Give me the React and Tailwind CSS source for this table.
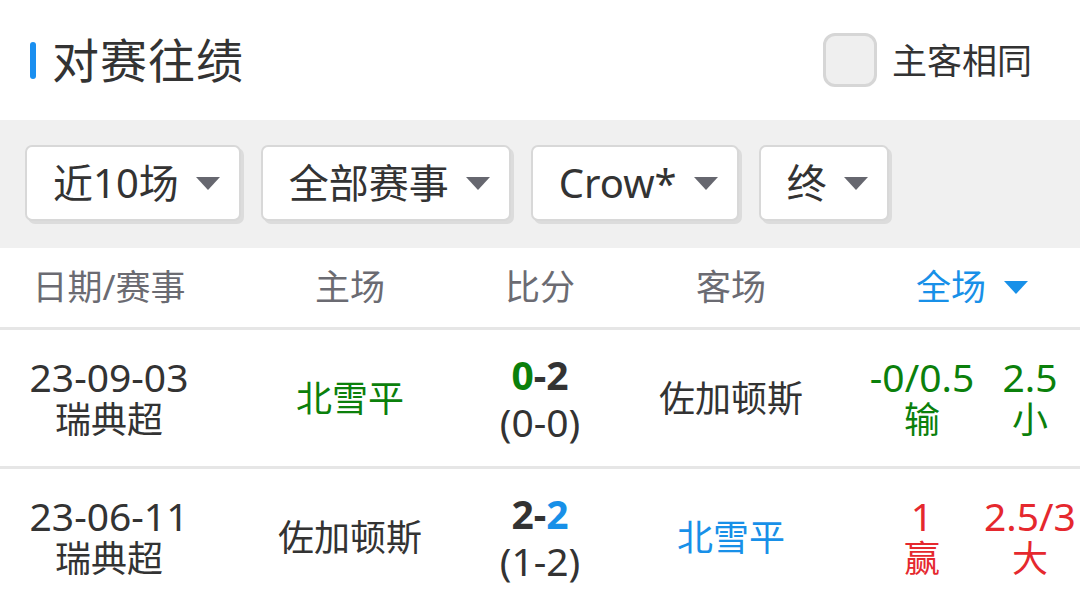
import React from 'react';

const font = { fontFamily: '"Noto Sans", "Noto Sans CJK SC", sans-serif' };

const filters = ['近10场', '全部赛事', 'Crow*', '终'];

const matches = [
  {
    date: '23-09-03',
    league: '瑞典超',
    home: '北雪平',
    homeColor: 'text-[#0b800b]',
    away: '佐加顿斯',
    awayColor: 'text-[#333333]',
    score: [
      { t: '0', c: 'text-[#0b800b]' },
      { t: '-2', c: 'text-[#333333]' },
    ],
    half: '(0-0)',
    handicap: '-0/0.5',
    handicapRes: '输',
    total: '2.5',
    totalRes: '小',
    oddsColor: 'text-[#0b800b]',
  },
  {
    date: '23-06-11',
    league: '瑞典超',
    home: '佐加顿斯',
    homeColor: 'text-[#333333]',
    away: '北雪平',
    awayColor: 'text-[#1890e8]',
    score: [
      { t: '2-', c: 'text-[#333333]' },
      { t: '2', c: 'text-[#1890e8]' },
    ],
    half: '(1-2)',
    handicap: '1',
    handicapRes: '赢',
    total: '2.5/3',
    totalRes: '大',
    oddsColor: 'text-[#e5282e]',
  },
];

function Caret({ className }) {
  return (
    <svg width="24" height="13" viewBox="0 0 24 13" className={className}>
      <path d="M0 0 H24 L12 13 Z" fill="currentColor" />
    </svg>
  );
}

export default function App() {
  return (
    <div className="w-[1080px] h-[590px] bg-white overflow-hidden" style={font}>
      {/* 标题 */}
      <div className="h-[120px] flex items-center justify-between pl-[30px] pr-[48px]">
        <div className="flex items-center">
          <div className="w-[6px] h-[37px] rounded-full bg-[#1a8ff0]"></div>
          <h1 className="ml-[16px] text-[47px] leading-none text-[#333333] tracking-[1px]">对赛往绩</h1>
        </div>
        <label className="flex items-center gap-[15px]">
          <span className="w-[54px] h-[54px] rounded-[12px] border-[3px] border-[#d6d6d6] bg-[#efefef]"></span>
          <span className="text-[35px] leading-none text-[#333333]">主客相同</span>
        </label>
      </div>

      {/* 筛选 */}
      <div className="h-[128px] bg-[#f0f0f0] flex items-start gap-[20px] px-[25px] pt-[25px]">
        {filters.map((f) => (
          <button
            key={f}
            className="h-[76px] flex items-center gap-[17px] pl-[26px] pr-[19px] bg-white border-2 border-[#d8d8d8] rounded-[7px] shadow-[3px_3px_0_#dcdcdc]"
          >
            <span className="text-[40px] leading-none text-[#333333]">{f}</span>
            <Caret className="text-[#66676f]" />
          </button>
        ))}
      </div>

      {/* 表头 */}
      <div className="grid grid-cols-[218px_264px_116px_266px_116px_100px] h-[82px] border-b-[3px] border-[#e6e6e6] text-[35px] text-[#6b6b72] items-center text-center">
        <div>日期/赛事</div>
        <div>主场</div>
        <div>比分</div>
        <div>客场</div>
        <div className="col-span-2 flex items-center justify-center gap-[18px] text-[#1890e8]">
          <span>全场</span>
          <Caret />
        </div>
      </div>

      {/* 比赛列表 */}
      {matches.map((m) => (
        <div
          key={m.date}
          className="grid grid-cols-[218px_264px_116px_266px_116px_100px] h-[139px] border-b-[3px] border-[#e6e6e6] items-center text-center text-[36px] leading-[43px] text-[#333333]"
        >
          <div className="flex flex-col">
            <span className="text-[39px]">{m.date}</span>
            <span>{m.league}</span>
          </div>
          <div className={m.homeColor}>{m.home}</div>
          <div className="flex flex-col text-[39px]">
            <span className="font-bold">
              {m.score.map((s, i) => (
                <span key={i} className={s.c}>{s.t}</span>
              ))}
            </span>
            <span className="mt-[4px]">{m.half}</span>
          </div>
          <div className={m.awayColor}>{m.away}</div>
          <div className={`flex flex-col ${m.oddsColor}`}>
            <span className="text-[39px]">{m.handicap}</span>
            <span>{m.handicapRes}</span>
          </div>
          <div className={`flex flex-col ${m.oddsColor}`}>
            <span className="text-[39px]">{m.total}</span>
            <span>{m.totalRes}</span>
          </div>
        </div>
      ))}
    </div>
  );
}
